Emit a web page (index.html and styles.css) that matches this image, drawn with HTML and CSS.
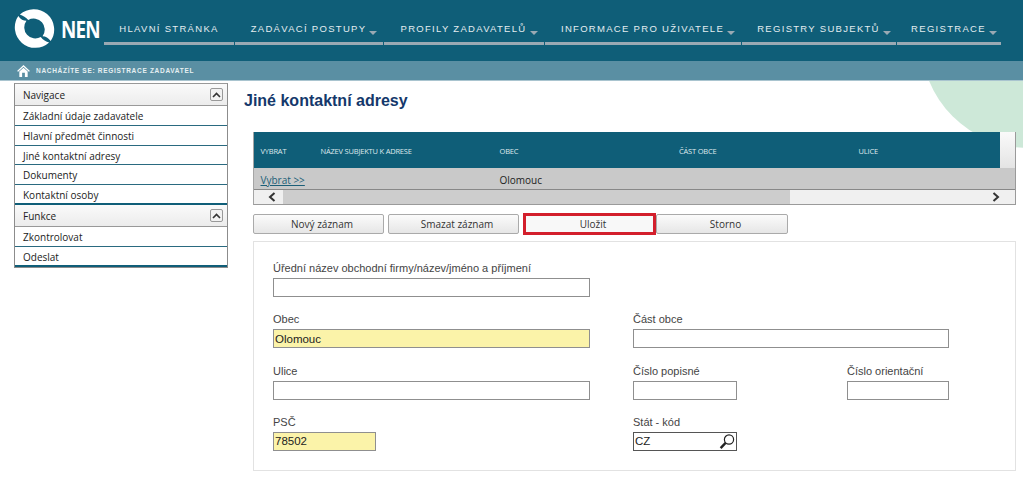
FILE: index.html
```html
<!DOCTYPE html>
<html lang="cs">
<head>
<meta charset="utf-8">
<title>NEN – Jiné kontaktní adresy</title>
<link rel="stylesheet" href="styles.css">
</head>
<body>
<header class="topbar">
  <div class="brand">
    <svg class="logo" viewBox="0 0 41 41" aria-hidden="true">
      <g transform="rotate(28 20.500 20.500)">
        <path fill="#fff" d="M1 15A20.500 20.500 0 0 1 40.700 24C37 22 34 22 31.200 23.500A11 11 0 0 0 11 16C8 14.500 4 14.500 1 15Z"/>
        <path fill="#fff" d="M1 15A20.500 20.500 0 0 1 40.700 24C37 22 34 22 31.200 23.500A11 11 0 0 0 11 16C8 14.500 4 14.500 1 15Z" transform="rotate(180 20.500 20.500)"/>
      </g>
    </svg>
    <span class="brand-name">NEN</span>
  </div>
  <nav class="mainnav">
    <a class="nav-item w-home">HLAVNÍ STRÁNKA</a>
    <a class="nav-item w-zad has-arrow">ZADÁVACÍ POSTUPY</a>
    <a class="nav-item w-pro has-arrow">PROFILY ZADAVATELŮ</a>
    <a class="nav-item w-inf has-arrow">INFORMACE PRO UŽIVATELE</a>
    <a class="nav-item w-reg has-arrow">REGISTRY SUBJEKTŮ</a>
    <a class="nav-item w-rgs has-arrow">REGISTRACE</a>
  </nav>
</header>
<div class="crumbs">
  <svg class="home" viewBox="0 0 14 13" aria-hidden="true">
    <path fill="#fff" d="M7 0L14 6.500L12.800 7.300L7 2L1.200 7.300L0 6.500Z"/>
    <path fill="#fff" fill-rule="evenodd" d="M2.500 7L7 3L11.500 7V13H2.500ZM5.500 8.500V13H8.500V8.500Z"/>
  </svg>
  <span>NACHÁZÍTE SE: REGISTRACE ZADAVATEL</span>
</div>
<div class="page">
  <div class="blob"></div>
  <aside class="sidebar">
    <div class="side-head"><span>Navigace</span><span class="collapse"><svg viewBox="0 0 9 6"><path d="M1 5L4.500 1.500L8 5" fill="none" stroke="#333" stroke-width="1.600"/></svg></span></div>
    <a class="side-link">Základní údaje zadavatele</a>
    <a class="side-link">Hlavní předmět činnosti</a>
    <a class="side-link">Jiné kontaktní adresy</a>
    <a class="side-link">Dokumenty</a>
    <a class="side-link last">Kontaktní osoby</a>
    <div class="side-head next"><span>Funkce</span><span class="collapse"><svg viewBox="0 0 9 6"><path d="M1 5L4.500 1.500L8 5" fill="none" stroke="#333" stroke-width="1.600"/></svg></span></div>
    <a class="side-link">Zkontrolovat</a>
    <a class="side-link last">Odeslat</a>
  </aside>
  <main class="content">
    <h1 class="title">Jiné kontaktní adresy</h1>
    <div class="grid">
      <div class="grid-top">
        <div class="grid-head">
          <span class="col c1">VYBRAT</span>
          <span class="col c2">NÁZEV SUBJEKTU K ADRESE</span>
          <span class="col c3">OBEC</span>
          <span class="col c3">ČÁST OBCE</span>
          <span class="col c3">ULICE</span>
        </div>
        <div class="grid-corner"></div>
      </div>
      <div class="grid-row">
        <a class="col c1 pick">Vybrat &gt;&gt;</a>
        <span class="col c2"></span>
        <span class="col c3">Olomouc</span>
      </div>
      <div class="scroll">
        <span class="arrow"><svg viewBox="0 0 8 10"><path d="M6.500 1L2 5L6.500 9" fill="none" stroke="#333" stroke-width="2"/></svg></span>
        <span class="thumb"></span>
        <span class="arrow end"><svg viewBox="0 0 8 10"><path d="M1.500 1L6 5L1.500 9" fill="none" stroke="#333" stroke-width="2"/></svg></span>
      </div>
    </div>
    <div class="actions">
      <button class="btn">Nový záznam</button>
      <button class="btn">Smazat záznam</button>
      <button class="btn marked">Uložit</button>
      <button class="btn">Storno</button>
    </div>
    <form class="panel">
      <div class="fld wide-a">
        <label>Úřední název obchodní firmy/název/jméno a příjmení</label>
        <input class="inp" type="text">
      </div>
      <div class="fld a"><label>Obec</label><input class="inp req" type="text" value="Olomouc"></div>
      <div class="fld b"><label>Část obce</label><input class="inp" type="text"></div>
      <div class="fld a"><label>Ulice</label><input class="inp" type="text"></div>
      <div class="fld c"><label>Číslo popisné</label><input class="inp" type="text"></div>
      <div class="fld d"><label>Číslo orientační</label><input class="inp" type="text"></div>
      <div class="fld e"><label>PSČ</label><input class="inp req" type="text" value="78502"></div>
      <div class="fld c">
        <label>Stát - kód</label>
        <div class="lookup">
          <input class="inp plain" type="text" value="CZ">
          <svg class="lens" viewBox="0 0 16 16" aria-hidden="true">
            <circle cx="10" cy="6" r="4.600" fill="#fff" stroke="#222" stroke-width="1.200"/>
            <path d="M6.600 9.400L1.600 14.600" stroke="#222" stroke-width="2.400"/>
          </svg>
        </div>
      </div>
    </form>
  </main>
</div>
</body>
</html>
```
FILE: styles.css
```css
* { box-sizing: border-box; }
html, body { margin: 0; padding: 0; }
body {
  width: 1023px;
  height: 477px;
  overflow: hidden;
  background: #fff;
  font-family: "Liberation Sans", Arial, sans-serif;
  color: #333;
}
.topbar {
  height: 61px;
  background: #0f5e78;
  display: flex;
  padding-left: 14px;
}
.brand { display: flex; align-items: center; width: 90px; height: 57px; flex: none; }
.logo { width: 41px; height: 41px; flex: none; }
.brand-name {
  font-family: "Open Sans", sans-serif;
  font-weight: 700;
  font-size: 23px;
  color: #fff;
  margin-left: 6px;
  letter-spacing: -1px;
  transform: scaleX(.82);
  transform-origin: left;
}
.mainnav { display: flex; gap: 1px; height: 45px; }
.nav-item {
  height: 45px;
  padding-top: 22px;
  border-bottom: 3px solid #9aa9b3;
  font-size: 9.5px;
  line-height: 13px;
  letter-spacing: 1.3px;
  color: #e4edf0;
  text-align: center;
  white-space: nowrap;
}
.has-arrow { padding-left: 10px; }
.has-arrow::after {
  content: "";
  display: inline-block;
  margin-left: 3px;
  vertical-align: -3px;
  border: 4.5px solid transparent;
  border-top: 4px solid #9aa9b3;
  border-bottom: 0;
}
.w-home { width: 130px; }
.w-zad { width: 148px; }
.w-pro { width: 160px; }
.w-inf { width: 196px; }
.w-reg { width: 154px; }
.w-rgs { width: 104px; }
.crumbs {
  height: 20px;
  background: #5a8fa3;
  border-bottom: 1px solid #a9c4cf;
  display: flex;
  align-items: center;
  padding-left: 17px;
  font-size: 6.5px;
  font-weight: 700;
  letter-spacing: .7px;
  color: #e6eff2;
}
.home { width: 13px; height: 12px; margin-right: 6px; }
.page {
  position: relative;
  height: 396px;
  display: flex;
  align-items: flex-start;
  padding: 2px 7px 0 14px;
  overflow: hidden;
}
.blob {
  position: absolute;
  left: 921px;
  top: -149px;
  width: 216px;
  height: 216px;
  border-radius: 50%;
  background: #cde8d8;
}
.sidebar {
  position: relative;
  width: 214px;
  flex: none;
  border: 1px solid #8c8c8c;
  border-top-color: #999;
  background: #fff;
  font-family: "Open Sans", sans-serif;
  font-size: 10px;
  color: #222;
}
.side-head {
  height: 22px;
  display: flex;
  align-items: center;
  justify-content: space-between;
  padding: 0 4px 0 8px;
  background: linear-gradient(#fafafa, #ececec);
  border-bottom: 1px solid #999;
}
.side-head.next { padding-top: 1px; }
.collapse {
  width: 13px;
  height: 13px;
  border: 1px solid #999;
  border-radius: 2px;
  background: #f2f2f2;
  display: flex;
  align-items: center;
  justify-content: center;
}
.collapse svg { width: 9px; height: 6px; }
.side-link {
  display: block;
  height: 19.8px;
  line-height: 20px;
  padding-left: 8px;
  border-bottom: 1px solid #2a6a80;
  white-space: nowrap;
}
.side-link.last { border-bottom: 2px solid #0f5e78; }
.content { position: relative; margin-left: 16px; flex: 1; min-width: 0; }
.title {
  margin: 8px 0 22px;
  font-size: 16px;
  line-height: 19px;
  font-weight: 700;
  color: #14386b;
}
.grid { margin-left: 9px; border: 1px solid #9a9a9a; border-top: 0; border-left: 1px solid #a5a5a5; height: 73px; }
.grid-top { display: flex; height: 36px; }
.grid-head { flex: 1; min-width: 0; overflow: hidden; display: flex; align-items: center; padding-top: 2px; background: #0f5e78; color: #dfe9ed; font-family: "Open Sans", sans-serif; font-size: 7.5px; letter-spacing: -.2px; }
.grid-corner { width: 15px; flex: none; background: linear-gradient(#fafafa, #e4e4e4); }
.col { display: block; padding-left: 6.500px; flex: none; white-space: nowrap; }
.c1 { width: 60px; }
.c2 { width: 179px; }
.c3 { width: 179.500px; }
.grid-row {
  height: 22px;
  display: flex;
  align-items: center;
  padding-top: 2px;
  background: #c9c9c9;
  border-bottom: 1px solid #888;
  font-family: "Open Sans", sans-serif;
  font-size: 10px;
  color: #222;
}
.pick { color: #1c5f78; text-decoration: underline; }
.scroll { height: 14px; display: flex; background: #f0f0f0; }
.arrow { width: 29px; flex: none; display: flex; align-items: center; padding-left: 14px; background: #f0f0f0; }
.arrow svg { width: 8px; height: 10px; }
.arrow.end { width: 9px; padding-left: 0; margin-left: auto; margin-right: 14px; }
.thumb { width: 507px; background: #cdcdcd; }
.actions { display: flex; margin: 9px 0 7px 9px; height: 20px; gap: 4px; }
.btn {
  width: 131px;
  height: 20px;
  padding: 0 0 0 7px;
  border: 1px solid #aaa;
  border-radius: 2px;
  background: linear-gradient(#fbfbfb, #e6e6e6);
  font-family: "Open Sans", sans-serif;
  font-size: 10px;
  color: #333;
}
.btn.marked {
  background: #f8f8f8;
  border: 0;
  border-radius: 0;
  outline: 3px solid #d31f2c;
  outline-offset: -3px;
  width: 133px;
  height: 22px;
  margin-top: -1px;
}
.btn:nth-child(4) { margin-left: -4px; width: 132px; }
.panel {
  margin-left: 9px;
  height: 230px;
  border: 1px solid #e2e2e2;
  padding: 19px 0 0 19px;
  display: grid;
  grid-template-columns: 360px 214px 102px;
  grid-auto-rows: 51.33px;
  align-content: start;
  background: #fff;
}
.fld { display: flex; flex-direction: column; justify-content: flex-start; font-size: 11px; color: #444; }
.fld label { height: 17px; line-height: 14px; white-space: nowrap; }
.inp {
  display: block;
  height: 19px;
  margin: 0;
  padding: 0 1px;
  border: 1px solid #8f8f8f;
  background: #fff;
  font: 11.500px "Liberation Sans", Arial, sans-serif;
  color: #222;
  width: 100%;
  border-radius: 0;
}
.req { background: #fbf3a9; }
.wide-a { grid-column: 1 / -1; }
.wide-a .inp, .a .inp { width: 317px; }
.b { grid-column: 2 / 4; }
.b .inp { width: 316px; }
.c .inp, .lookup { width: 104px; }
.d .inp { width: 102px; }
.e .inp { width: 103px; }
.lookup { position: relative; height: 19px; border: 1px solid #555; }
.inp.plain { border: 0; height: 17px; width: 100%; }
.lens { position: absolute; right: 1px; top: 0; width: 16px; height: 17px; }
```
